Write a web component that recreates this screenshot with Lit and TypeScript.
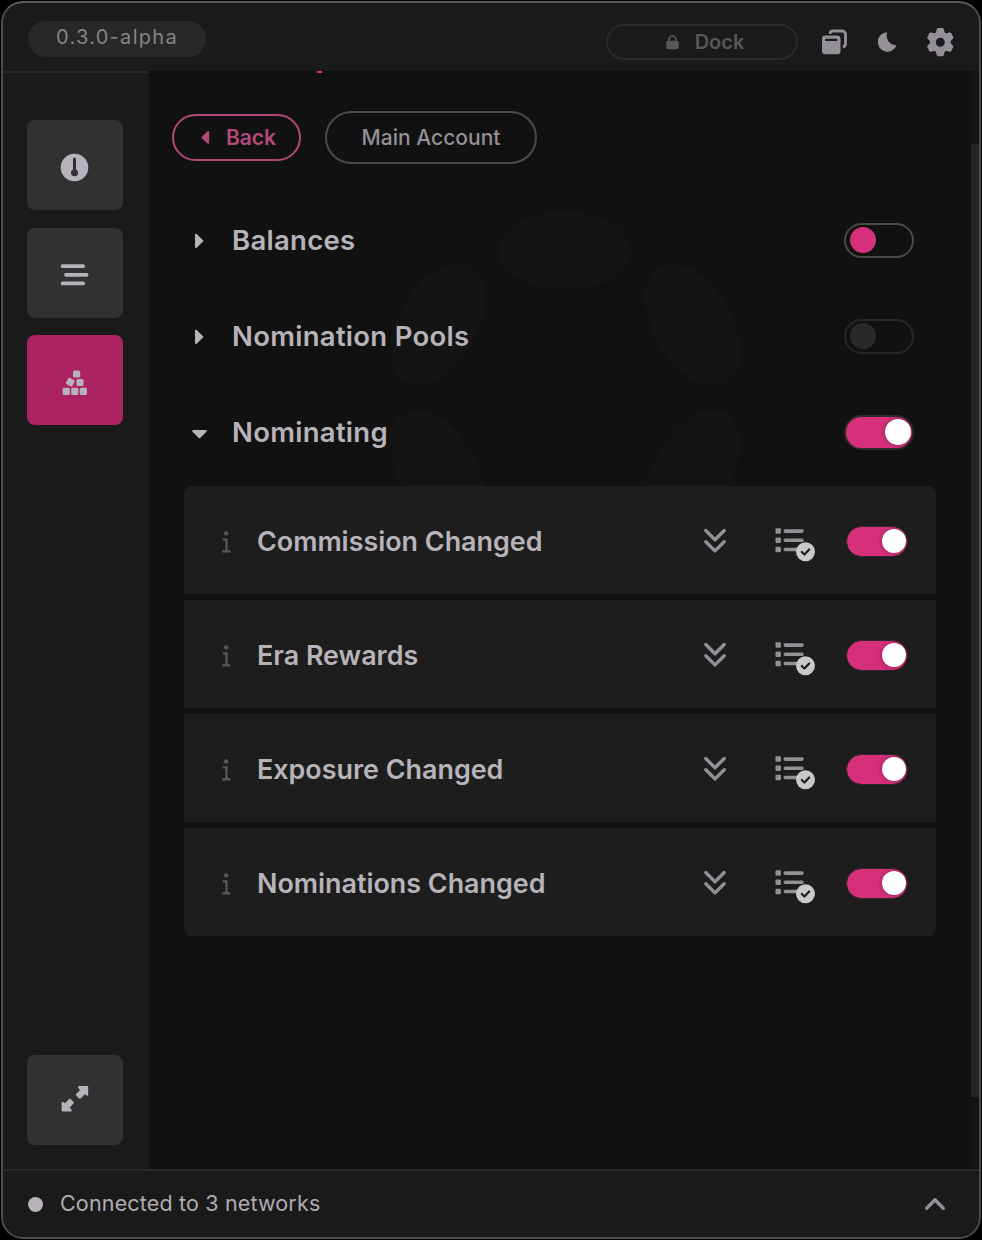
import { LitElement, html, css, svg } from "lit";
import { customElement, property } from "lit/decorators.js";
import { classMap } from "lit/directives/class-map.js";

@customElement("toggle-switch")
class ToggleSwitch extends LitElement {
  @property({ type: Boolean }) on = false;
  @property({ type: Boolean }) disabled = false;
  @property({ type: Boolean }) small = false;

  static styles = css`
    :host { display: block; }
    .track { box-sizing: border-box; width: 70px; height: 35px; border: 2px solid #494949; border-radius: 18px; display: flex; align-items: center; padding: 0 4px; }
    .knob { width: 26px; height: 26px; border-radius: 50%; background: #d6307a; }
    .disabled { border-color: #272727; }
    .disabled .knob { background: #292929; }
    .on { background: #d6307a; border-color: #2e2a2c; justify-content: flex-end; padding: 0 1px 1px 0; height: 35px; width: 70px; }
    .on .knob { background: #fff; box-shadow: 0 0 5px rgba(0, 0, 0, 0.35); }
    .small.on { width: 62px; height: 31px; border: 1px solid #33262c; padding: 0 1px 1px 0; }
    .small .knob { width: 24px; height: 24px; }
  `;

  render() {
    return html`<div class=${classMap({ track: true, on: this.on, disabled: this.disabled, small: this.small })}><div class="knob"></div></div>`;
  }
}

const dockIcon = svg`<g transform="translate(0 .5)"><path d="M8.200 4.500V4a2.500 2.500 0 0 1 2.500-2.500h9.500A3.300 3.300 0 0 1 23.500 4.800v9.500a3.300 3.300 0 0 1-2.600 3.200" fill="none" stroke="#958f97" stroke-width="2.900"/><rect x="0" y="6" width="18.500" height="18.800" rx="3.200" fill="#958f97"/><path d="M4.300 10.400h9.900" stroke="#1a1a1a" stroke-width="2.400" stroke-linecap="round"/></g>`;
const gearIcon = svg`<path transform="translate(.3 .3)" fill="#958f97" stroke="#958f97" stroke-width="2.800" stroke-linejoin="round" fill-rule="evenodd" d="M11.900 1.200h4.200l1.200 4 2.400 1.400 3.900-1.100 2.100 3.800-2.700 3.100v2.900l2.700 3-2.100 3.900-3.900-1.100-2.400 1.400-1.200 4h-4.200l-1.200-4-2.400-1.400-3.900 1.100-2.100-3.900 2.700-3v-2.900l-2.700-3.100 2.100-3.800 3.900 1.100 2.400-1.400zM14 8a5.900 5.900 0 1 0 0 11.800 5.900 5.900 0 0 0 0-11.800z"/>`;
const cubesIcon = svg`<g fill="#b8b2ba" transform="translate(.3 .5)"><rect x="10.700" y="0" width="7.200" height="7" rx="1.500"/><rect x="4.400" y="8" width="7.200" height="7.200" rx="1.500" transform="rotate(28 8 11.600)"/><rect x="14.200" y="8.500" width="7" height="7" rx="1.500"/><rect x="0.300" y="17.200" width="7.200" height="7.200" rx="1.500"/><rect x="8.900" y="17.200" width="7.200" height="7.200" rx="1.500"/><rect x="17.500" y="17.200" width="7.200" height="7.200" rx="1.500"/></g>`;
const expandIcon = svg`<g transform="translate(.6 -.5)" fill="#b8b2ba" stroke="#b8b2ba" stroke-width="2.200" stroke-linejoin="round"><path d="M17.500 1.500h8v7.600l-2.200-2-5 5-2.900-2.900 4.500-4.700z"/><path d="M9.100 25H1.100v-7.600l2.200 2 5-5 2.900 2.900-4.500 4.700z"/></g>`;
const listIcon = svg`<g transform="translate(-.5 .2)"><g fill="#958f97"><rect x="0" y="0" width="5.400" height="5.600" rx="1"/><rect x="0" y="9.300" width="5.400" height="5.600" rx="1"/><rect x="0" y="18.500" width="5.400" height="5.600" rx="1"/></g><path d="M9.800 2.900h16.700M9.800 12.100h16.700M9.800 21.300h16.700" stroke="#958f97" stroke-width="3.600" stroke-linecap="round"/><circle cx="30" cy="23.500" r="9.500" fill="#c9c9c9"/><path d="M26.300 23.800l2.600 2.500 4.800-5" fill="none" stroke="#1d1d1d" stroke-width="2.200" stroke-linecap="round" stroke-linejoin="round"/></g>`;

@customElement("app-root")
class AppRoot extends LitElement {
  static styles = css`
    :host { display: block; height: 1240px; background: #000; padding: 1px; box-sizing: border-box; font-family: Inter, sans-serif; color: #b8b2ba; }
    svg { display: block; overflow: visible; }
    .window { box-sizing: border-box; width: 980px; height: 1238px; border: 2px solid #4b4b4b; border-top-color: #5b595c; border-radius: 22px; overflow: hidden; background: #1a1a1a; display: grid; grid-template-rows: 68px 1098px 1fr; }
    .header { display: flex; align-items: center; justify-content: space-between; padding: 9px 25px 0 25px; }
    .version { box-sizing: border-box; width: 178px; height: 36px; margin-bottom: 6px; border-radius: 18px; background: #282828; color: #858585; font-size: 20px; letter-spacing: 1.3px; line-height: 32px; text-align: center; }
    .tools { display: flex; align-items: center; }
    .dock { box-sizing: border-box; width: 192px; height: 36px; border: 2px solid #292929; border-radius: 18px; display: flex; align-items: center; justify-content: center; gap: 16px; padding-left: 6px; color: #585858; font-size: 20px; font-weight: 600; margin-right: 24px; }
    .copy { margin-right: 30.500px; }
    .moon { margin-right: 29.500px; }
    .body { display: grid; grid-template-columns: 146px 1fr; }
    .sidebar { box-sizing: border-box; border-top: 2px solid #272727; padding: 47px 0 24px 24px; display: flex; flex-direction: column; gap: 18px; }
    .tile { box-sizing: border-box; width: 96px; height: 90px; border-radius: 8px; background: #313131; display: flex; align-items: center; justify-content: center; }
    .timer { padding-top: 5px; }
    .bars { padding: 3px 1px 0 0; }
    .active { background: #ab2461; margin-top: -1px; padding: 0 2px 1px 0; }
    .last { margin-top: auto; padding-right: 1px; }
    .content { position: relative; background: #111; display: grid; grid-template-columns: 822px 8px; }
    .mark { position: absolute; left: 168px; top: 0; width: 5px; height: 2px; background: #d6307a; }
    .watermark { position: absolute; left: 240px; top: 140px; }
    .main { position: relative; padding: 40px 35px 0 35px; }
    .crumbs { display: flex; align-items: center; gap: 24px; margin-left: -12px; height: 53px; margin-bottom: 28px; }
    .back, .account { box-sizing: border-box; display: flex; align-items: center; justify-content: center; font-size: 21px; padding-bottom: 1px; }
    .back { width: 129px; height: 47px; border: 2px solid #b14a79; border-radius: 24px; color: #b14a79; font-weight: 600; gap: 16px; padding-left: 4px; }
    .account { width: 212px; height: 53px; border: 2px solid #4b4b4b; border-radius: 27px; color: #958f97; font-weight: 450; letter-spacing: 0.020px; }
    .row { height: 96px; display: flex; align-items: center; padding: 0 22px 0 8px; }
    .caret { width: 40px; padding-top: 1px; }
    .title { font-size: 27.500px; letter-spacing: 0.280px; font-weight: 600; flex: 1; }
    .cards { display: grid; gap: 6px; margin-top: 6px; border-radius: 8px; overflow: hidden; }
    .card { box-sizing: border-box; height: 108px; background: #1d1d1d; display: flex; align-items: center; padding: 2px 28px 0 37px; }
    .info { width: 36px; padding-top: 2px; }
    .card .title { font-size: 26.900px; letter-spacing: 0; }
    .down { margin-right: 50px; }
    .list { margin: 0 30px 2px 0; }
    .scroll { padding-top: 73px; background: #131313; }
    .thumb { height: 953px; background: #252525; }
    .footer { border-top: 2px solid #292929; display: flex; align-items: center; padding: 0 34px 2px 25px; font-size: 21.500px; color: #b0aab2; font-weight: 430; }
    .dot { width: 15px; height: 15px; border-radius: 50%; background: #b8b2ba; margin: 2px 17px 0 0; }
    .status { flex: 1; letter-spacing: 0.160px; }
  `;

  sections = [
    { name: "Balances", on: false, disabled: false, open: false },
    { name: "Nomination Pools", on: false, disabled: true, open: false },
    { name: "Nominating", on: true, disabled: false, open: true },
  ];
  events = ["Commission Changed", "Era Rewards", "Exposure Changed", "Nominations Changed"];

  section(s: { name: string; on: boolean; disabled: boolean; open: boolean }) {
    return html`<div class="row">
      <div class="caret"><svg width="16" height="16" fill="#b8b2ba" stroke="#b8b2ba" stroke-width="2" stroke-linejoin="round">
        ${s.open ? svg`<path d="M1.200 6h12.600L7.500 12.200z"/>` : svg`<path d="M4 1.700v12.400L10.400 7.900z"/>`}
      </svg></div>
      <div class="title">${s.name}</div>
      <toggle-switch ?on=${s.on} ?disabled=${s.disabled}></toggle-switch>
    </div>`;
  }

  card(name: string) {
    return html`<div class="card">
      <svg class="info" width="36" height="22"><path d="M1.800 8.400h3.700v11.600M1.200 20.400h8.200" fill="none" stroke="#5a585b" stroke-width="2.200"/><circle cx="5.200" cy="2.400" r="2.200" fill="#5a585b"/></svg>
      <div class="title">${name}</div>
      <svg class="down" width="22" height="24" fill="none" stroke="#958f97" stroke-width="3.400" stroke-linecap="round" stroke-linejoin="round"><path d="M1.800 1.500l9.200 9.200 9.200-9.200M1.800 12.700l9.200 9.200 9.200-9.200"/></svg>
      <svg class="list" width="40" height="25">${listIcon}</svg>
      <toggle-switch on small></toggle-switch>
    </div>`;
  }

  render() {
    return html`<div class="window">
      <div class="header">
        <div class="version">0.3.0-alpha</div>
        <div class="tools">
          <div class="dock">
            <svg width="13" height="14"><path d="M3 6.500V4.500a3.500 3.500 0 0 1 7 0v2" fill="none" stroke="#585858" stroke-width="1.700"/><rect x="0.200" y="5.800" width="12.600" height="8.400" rx="1.800" fill="#585858"/></svg>
            <span>Dock</span>
          </div>
          <svg class="copy" width="25" height="25">${dockIcon}</svg>
          <svg class="moon" width="19" height="20"><path fill="#958f97" d="M9.300.3A9.600 9.600 0 0 0 18.600 13.300 9.700 9.700 0 1 1 9.300.3z"/></svg>
          <svg width="28" height="28">${gearIcon}</svg>
        </div>
      </div>
      <div class="body">
        <div class="sidebar">
          <div class="tile timer"><svg width="28" height="28"><circle cx="13.500" cy="13.500" r="13.800" fill="#b8b2ba"/><path d="M13.500 5v13" stroke="#313131" stroke-width="3" stroke-linecap="round"/><circle cx="13.500" cy="18.800" r="3.500" fill="#313131"/></svg></div>
          <div class="tile bars"><svg width="28" height="22"><path d="M1.600 2.200h20.500M5.100 10.800h20.500M1.600 19.400h20.500" stroke="#b8b2ba" stroke-width="3.800" stroke-linecap="round"/></svg></div>
          <div class="tile active"><svg width="25" height="19">${cubesIcon}</svg></div>
          <div class="tile last"><svg width="27" height="29">${expandIcon}</svg></div>
        </div>
        <div class="content">
          <svg class="watermark" width="352" height="406" fill="#141414">
            <ellipse cx="175.500" cy="39.800" rx="67" ry="39"/>
            <ellipse cx="48.500" cy="113.500" rx="66.800" ry="39" transform="rotate(-60 48.500 113.500)"/>
            <ellipse cx="303.500" cy="113.500" rx="66.800" ry="39" transform="rotate(60 303.500 113.500)"/>
            <ellipse cx="48.500" cy="260.500" rx="66.800" ry="39" transform="rotate(60 48.500 260.500)"/>
            <ellipse cx="303.500" cy="260.500" rx="66.800" ry="39" transform="rotate(-60 303.500 260.500)"/>
          </svg>
          <div class="mark"></div>
          <div class="main">
            <div class="crumbs">
              <div class="back"><svg width="9" height="14"><path d="M7.200 2v10.800L1.500 7.400z" fill="#b14a79" stroke="#b14a79" stroke-width="2" stroke-linejoin="round"/></svg><span>Back</span></div>
              <div class="account">Main Account</div>
            </div>
            ${this.sections.map((s) => this.section(s))}
            <div class="cards">${this.events.map((e) => this.card(e))}</div>
          </div>
          <div class="scroll"><div class="thumb"></div></div>
        </div>
      </div>
      <div class="footer">
        <div class="dot"></div>
        <div class="status">Connected to 3 networks</div>
        <svg width="20" height="13"><path d="M1.700 11.200L10 2.700l8.300 8.500" fill="none" stroke="#958f97" stroke-width="3.400" stroke-linecap="round" stroke-linejoin="round"/></svg>
      </div>
    </div>`;
  }
}
